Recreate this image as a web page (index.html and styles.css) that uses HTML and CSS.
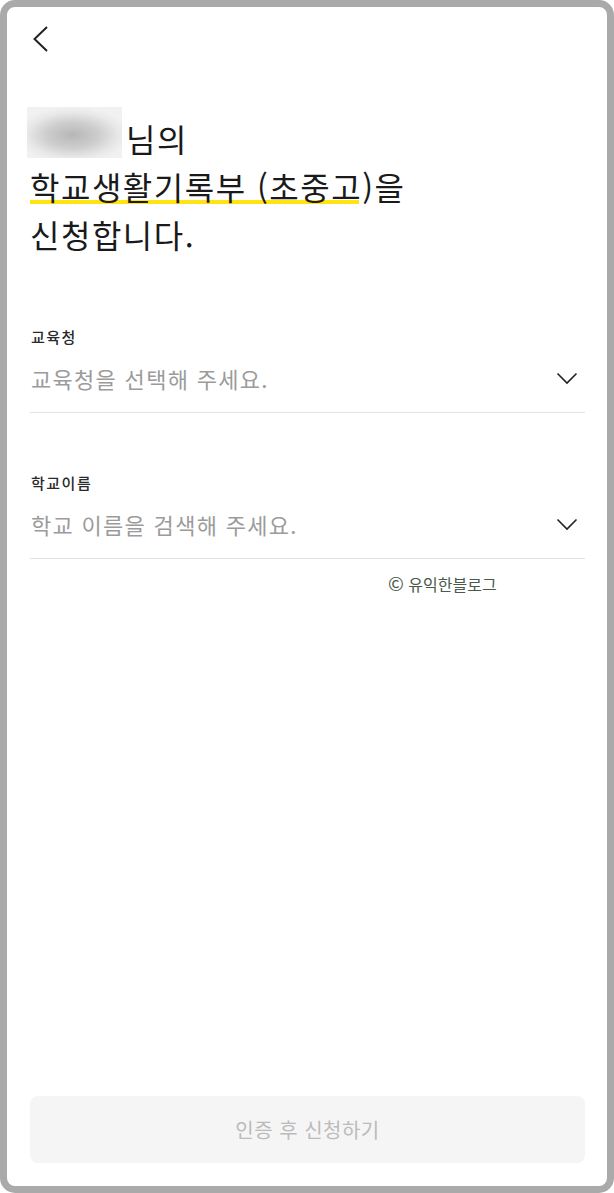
FILE: index.html
```html
<!DOCTYPE html>
<html lang="ko">
  <head>
    <meta charset="UTF-8" />
    <meta name="viewport" content="width=device-width, initial-scale=1.0" />
    <title>학교생활기록부 신청</title>
    <link rel="stylesheet" href="styles.css">
  </head>
  <body>
    <div class="screen">
      <div class="top-bar">
        <button class="back-btn" aria-label="뒤로">
          <svg width="17" height="28" viewBox="0 0 17 28">
            <path d="M15 2 L2.5 14 L15 26" fill="none" stroke="#222" stroke-width="2" />
          </svg>
        </button>
      </div>

      <h1 class="title">
        <span class="name-mask"></span>님의<br>
        <span class="highlight">학교생활기록부 (초중고</span>)을<br>
        신청합니다.
      </h1>

      <div class="field">
        <div class="field-label">교육청</div>
        <div class="select-row">
          <span class="placeholder">교육청을 선택해 주세요.</span>
          <svg class="chevron" width="24" height="24" viewBox="0 0 24 24">
            <path d="M2.5 7.5 L12 17 L21.5 7.5" fill="none" stroke="#222" stroke-width="1.6" />
          </svg>
        </div>
      </div>

      <div class="field">
        <div class="field-label">학교이름</div>
        <div class="select-row">
          <span class="placeholder">학교 이름을 검색해 주세요.</span>
          <svg class="chevron" width="24" height="24" viewBox="0 0 24 24">
            <path d="M2.5 7.5 L12 17 L21.5 7.5" fill="none" stroke="#222" stroke-width="1.6" />
          </svg>
        </div>
      </div>

      <div class="watermark"><span class="copy-mark">©</span> 유익한블로그</div>

      <div class="spacer"></div>

      <button class="submit-btn" disabled>인증 후 신청하기</button>
    </div>
  </body>
</html>
```

FILE: styles.css
```css
* {
  box-sizing: border-box;
}
body {
  margin: 0;
  background: #fff;
  font-family: "Noto Sans CJK KR", "Noto Sans", sans-serif;
}
.screen {
  height: 100vh;
  border: 7px solid #aaaaaa;
  border-radius: 15px;
  background: #fff;
  padding: 0 22px 23px 23px;
  display: flex;
  flex-direction: column;
}
.top-bar {
  height: 64px;
  display: flex;
  align-items: center;
}
.back-btn {
  background: none;
  border: none;
  padding: 0;
  margin-left: 2px;
  display: flex;
  cursor: pointer;
}
.title {
  margin: 43px 0 0;
  font-size: 32px;
  font-weight: 400;
  line-height: 48px;
  letter-spacing: 1.5px;
  color: #1a1a1a;
}
.name-mask {
  display: inline-block;
  vertical-align: top;
  width: 95px;
  height: 51px;
  margin: -7px 4px 0 -3px;
  background: radial-gradient(ellipse 60% 55% at 48% 55%, #b7b7b7 0%, #cdcdcd 45%, #e8e8e8 80%, #f1f1f1 100%);
}
.highlight {
  background-image: linear-gradient(#ffe312, #ffe312);
  background-repeat: no-repeat;
  background-size: calc(100% - 3px) 4px;
  background-position: 0 calc(100% - 5px);
}
.field {
  margin-top: 69px;
}
.field + .field {
  margin-top: 60px;
}
.field-label {
  font-size: 15px;
  font-weight: 500;
  line-height: 20px;
  letter-spacing: 1.5px;
  color: #2a2a2a;
  padding-left: 1px;
}
.select-row {
  display: flex;
  align-items: center;
  justify-content: space-between;
  padding: 10px 0 13px 1px;
  border-bottom: 1px solid #e2e2e2;
}
.placeholder {
  font-size: 22px;
  line-height: 42px;
  letter-spacing: 1.3px;
  color: #9b9b9b;
}
.chevron {
  margin-right: 6px;
}
.watermark {
  margin-top: 14px;
  padding-left: 358px;
  font-size: 16px;
  line-height: 20px;
  color: #4c584c;
}
.copy-mark {
  font-size: 19px;
  line-height: 1;
}
.spacer {
  flex: 1;
}
.submit-btn {
  height: 67px;
  width: 100%;
  border: none;
  border-radius: 8px;
  background: #f5f5f5;
  color: #bbbbbb;
  font-family: inherit;
  font-size: 20px;
  letter-spacing: 0.5px;
}
```
